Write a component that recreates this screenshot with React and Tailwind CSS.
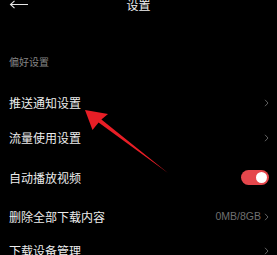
import React from 'react'

function Chevron() {
  return (
    <svg width="5" height="8" viewBox="0 0 5 8" className="shrink-0">
      <path d="M1 0.8 L4 4 L1 7.2" fill="none" stroke="#6b6b6b" strokeWidth="0.9" />
    </svg>
  )
}

function Row({ h, label, children }) {
  return (
    <div className={`flex items-center justify-between pl-[9px] pr-[8px] ${h}`}>
      <span className="text-[12px] leading-none text-[#ececec]">{label}</span>
      {children}
    </div>
  )
}

export default function App() {
  return (
    <div
      className="relative w-[277px] h-[255px] overflow-hidden bg-black"
      style={{ fontFamily: '"Noto Sans CJK SC", "Noto Sans", sans-serif' }}
    >
      <div className="relative flex h-[10px] items-center justify-center">
        <svg width="20" height="10" viewBox="0 0 20 10" className="absolute left-[9px] top-0">
          <path d="M19 4.5 H1.5 M5.5 0.8 L1.5 4.5 L5.5 8.2" fill="none" stroke="#e6e6e6" strokeWidth="1.1" />
        </svg>
        <span className="text-[12px] leading-none text-[#f0f0f0]">设置</span>
      </div>

      <div className="flex h-[76px] items-end pb-[19px] pl-[9px]">
        <span className="text-[10px] leading-none text-[#858585]">偏好设置</span>
      </div>

      <div className="flex flex-col">
        <Row h="h-[34px]" label="推送通知设置">
          <Chevron />
        </Row>
        <Row h="h-[35px]" label="流量使用设置">
          <Chevron />
        </Row>
        <Row h="h-[45px]" label="自动播放视频">
          <div className="flex h-[15px] w-[28px] items-center justify-end rounded-full bg-[#e5474c] pr-[2px]">
            <div className="h-[11px] w-[11px] rounded-full bg-white" />
          </div>
        </Row>
        <Row h="h-[33px]" label="删除全部下载内容">
          <div className="flex items-center gap-[3px]">
            <span className="text-[10.5px] font-light leading-none text-[#6f6f6f]" style={{ fontFamily: '"Liberation Sans", sans-serif' }}>
              0MB/8GB
            </span>
            <Chevron />
          </div>
        </Row>
        <Row h="h-[36px]" label="下载设备管理">
          <Chevron />
        </Row>
      </div>

      <svg width="277" height="255" viewBox="0 0 277 255" className="pointer-events-none absolute left-0 top-0">
        <polygon
          points="85,110 108,114 101.4,119.6 168,173 98.6,122.4 92.5,130"
          fill="#e81e26"
        />
      </svg>
    </div>
  )
}
